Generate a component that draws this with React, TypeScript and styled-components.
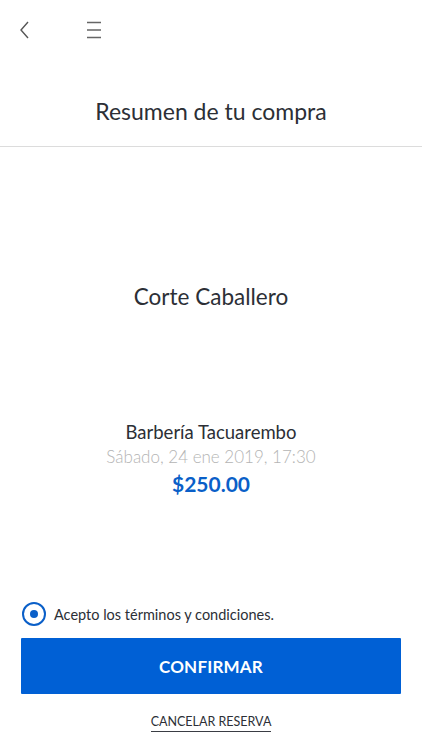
import React from 'react';
import styled, { createGlobalStyle } from 'styled-components';

const GlobalStyle = createGlobalStyle`
  html, body {
    margin: 0;
    padding: 0;
    background: #ffffff;
  }
  body {
    font-family: Lato, "Open Sans", "Liberation Sans", sans-serif;
    color: #2c2f36;
  }
`;

const Screen = styled.div`
  width: 422px;
  height: 750px;
  display: flex;
  flex-direction: column;
  background: #fff;
  overflow: hidden;
`;

const TopBar = styled.div`
  height: 60px;
  display: flex;
  align-items: center;
  padding-left: 18px;
  gap: 53px;
`;

const IconButton = styled.button`
  border: none;
  background: none;
  padding: 0;
  display: flex;
  align-items: center;
  justify-content: center;
  cursor: pointer;
`;

const Header = styled.div`
  height: 87px;
  display: flex;
  align-items: center;
  justify-content: center;
  border-bottom: 1px solid #dcdcdc;
  box-sizing: border-box;
`;

const Title = styled.h1`
  margin: 0;
  margin-top: 16px;
  font-size: 23px;
  font-weight: 400;
  color: #2c2f36;
`;

const Body = styled.div`
  flex: 1;
  display: flex;
  flex-direction: column;
  align-items: center;
`;

const Service = styled.div`
  margin-top: 136px;
  font-size: 22.5px;
  color: #2c2f36;
`;

const Shop = styled.div`
  margin-top: 111px;
  font-size: 18.5px;
  color: #2c2f36;
`;

const DateLine = styled.div`
  margin-top: 3px;
  font-size: 17px;
  font-weight: 300;
  color: #b4b4b4;
`;

const Price = styled.div`
  margin-top: 4px;
  font-size: 21px;
  font-weight: 700;
  color: #0a5fc8;
`;

const Footer = styled.div`
  display: flex;
  flex-direction: column;
  padding: 0 21px 18px;
`;

const Terms = styled.label`
  display: flex;
  align-items: center;
  gap: 8px;
  font-size: 14.5px;
  color: #2c2f36;
  cursor: pointer;
`;

const Radio = styled.span`
  width: 20px;
  height: 20px;
  margin-left: 1px;
  border: 2px solid #0a5fc8;
  border-radius: 50%;
  display: flex;
  align-items: center;
  justify-content: center;

  &::after {
    content: '';
    width: 8px;
    height: 8px;
    border-radius: 50%;
    background: #0a5fc8;
  }
`;

const ConfirmButton = styled.button`
  margin-top: 12px;
  height: 56px;
  width: 100%;
  border: none;
  border-radius: 1px;
  background: #0060d5;
  color: #fff;
  font-family: inherit;
  font-size: 17px;
  font-weight: 700;
  letter-spacing: 0.2px;
  cursor: pointer;
`;

const CancelLink = styled.a`
  align-self: center;
  margin-top: 20px;
  font-size: 12.5px;
  color: #2c2f36;
  text-decoration: none;
  border-bottom: 1.5px solid #3a3d44;
  padding-bottom: 2px;
  cursor: pointer;
`;

const BackIcon = () => (
  <svg width="14" height="20" viewBox="0 0 14 20" fill="none">
    <path d="M10 2 L3 10 L10 18" stroke="#555" strokeWidth="1.4" />
  </svg>
);

const MenuIcon = () => (
  <svg width="18" height="20" viewBox="0 0 18 20" fill="none">
    <path d="M2 2.5 H16 M2 10 H16 M2 17.5 H16" stroke="#666" strokeWidth="1.3" />
  </svg>
);

export default function App() {
  return (
    <>
      <GlobalStyle />
      <Screen>
        <TopBar>
          <IconButton aria-label="Volver">
            <BackIcon />
          </IconButton>
          <IconButton aria-label="Menú">
            <MenuIcon />
          </IconButton>
        </TopBar>
        <Header>
          <Title>Resumen de tu compra</Title>
        </Header>
        <Body>
          <Service>Corte Caballero</Service>
          <Shop>Barbería Tacuarembo</Shop>
          <DateLine>Sábado, 24 ene 2019, 17:30</DateLine>
          <Price>$250.00</Price>
        </Body>
        <Footer>
          <Terms>
            <Radio />
            Acepto los términos y condiciones.
          </Terms>
          <ConfirmButton>CONFIRMAR</ConfirmButton>
          <CancelLink>CANCELAR RESERVA</CancelLink>
        </Footer>
      </Screen>
    </>
  );
}
